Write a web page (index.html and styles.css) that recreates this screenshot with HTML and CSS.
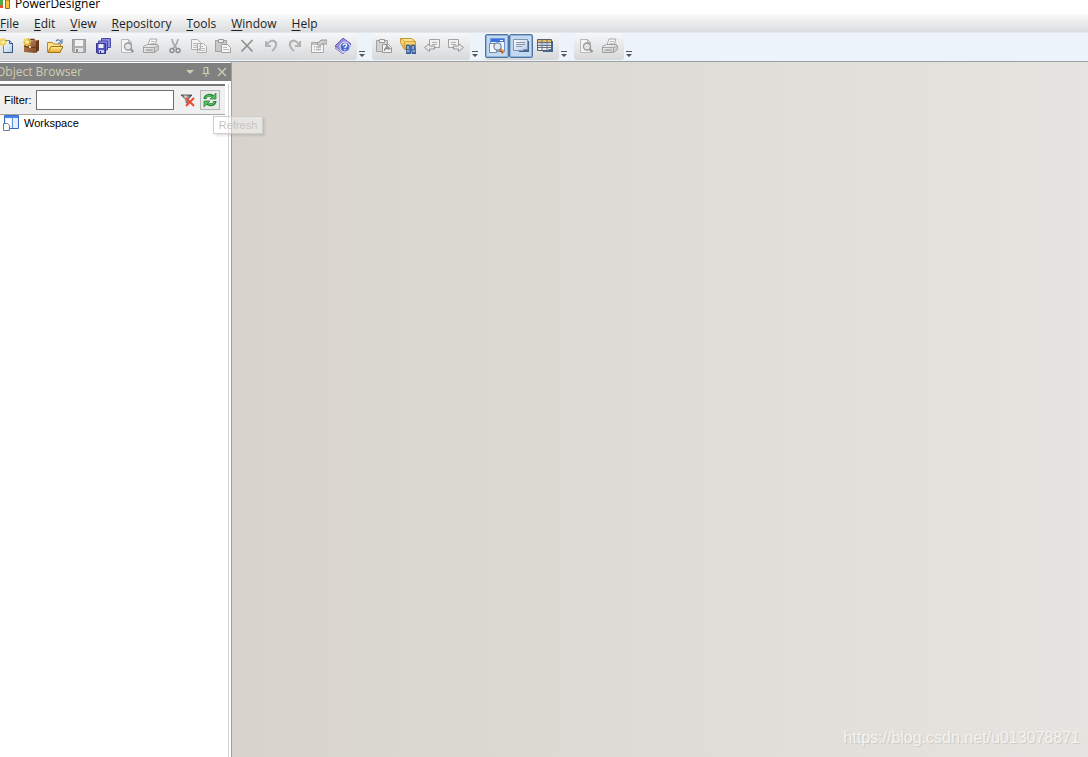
FILE: index.html
```html
<!DOCTYPE html>
<html lang="en">
<head>
<meta charset="utf-8">
<title>PowerDesigner</title>
<link rel="stylesheet" href="styles.css">
</head>
<body>
<svg class="sprite" aria-hidden="true">
  <defs>
    <linearGradient id="gold" x1="0" y1="0" x2="0" y2="1"><stop offset="0" stop-color="#fff0a0"/><stop offset="1" stop-color="#eba528"/></linearGradient>
    <linearGradient id="silver" x1="0" y1="0" x2="1" y2="1"><stop offset="0" stop-color="#fafafa"/><stop offset="1" stop-color="#c0c0c0"/></linearGradient>
    <linearGradient id="sky" x1="0" y1="0" x2="1" y2="1"><stop offset="0" stop-color="#fff"/><stop offset="1" stop-color="#b3cbe8"/></linearGradient>
    <linearGradient id="leather" x1="0" y1="0" x2="1" y2="1"><stop offset="0" stop-color="#c08a5c"/><stop offset="1" stop-color="#7a4222"/></linearGradient>
    <linearGradient id="funnel" x1="0" y1="0" x2="1" y2="0"><stop offset="0" stop-color="#333"/><stop offset=".4" stop-color="#ddd"/><stop offset="1" stop-color="#333"/></linearGradient>
  </defs>
  <symbol id="star" viewBox="0 0 16 16"><path d="M4 0v8M0 4h8M1 1l6 6M7 1L1 7" stroke="#f3cb45" stroke-width="1.600"/><circle cx="4" cy="4" r="1.600" fill="#fff7b0"/></symbol>
  <symbol id="new" viewBox="0 0 16 16"><path d="M4.500 2.500h6l3 3v9h-9z" fill="url(#sky)" stroke="#7187a3"/><path d="M10.500 2.500v3h3v9h-9" fill="none" stroke="#34567f"/><use href="#star"/></symbol>
  <symbol id="case" viewBox="0 0 16 16"><path d="M6 4V1.500h5V4" fill="none" stroke="#6c381c" stroke-width="1.400"/><path d="M1 4l3-1 12-1v10l-4 3-11-1z" fill="url(#leather)"/><path d="M13 4l3-2v10l-3 3z" fill="#6d3719"/><path d="M1 8c4 2 8 2 12 1" fill="none" stroke="#63331a"/><path d="M6 8h2v2H6z" fill="#f5d6a2"/><use href="#star"/></symbol>
  <symbol id="open" viewBox="0 0 16 16"><path d="M.5 14V4.500h5l1 1.500h7v8z" fill="#ffe28b" stroke="#b78825"/><path d="M1 14.500L4 8.500h12l-3 6z" fill="url(#gold)" stroke="#9f741b"/><path d="M9 3c2-2 4-1 5 1m1-3v4h-4" fill="none" stroke="#527da8" stroke-width="1.200"/></symbol>
  <symbol id="save" viewBox="0 0 16 16"><path d="M1.500 1.500h13v13h-12l-1-1z" fill="#b0b0b0" stroke="#989898"/><path d="M4 2h8v6H4z" fill="#f2f2f2"/><path d="M4 10h8v4H4z" fill="#e4e4e4"/><path d="M5 11h2v3H5z" fill="#909090"/></symbol>
  <symbol id="saveall" viewBox="0 0 16 16"><path d="M6.500.5h9v9h-9z" fill="#8a8adf" stroke="#4b4aa8"/><path d="M3.500 3h9v9h-9z" fill="#8587df" stroke="#4a4aa6"/><path d="M1.500 5.500h9v10h-8l-1-1z" fill="#5554bd" stroke="#34348d"/><path d="M3.500 6h5v4h-5z" fill="#edf0ff"/><path d="M4 12h5v3H4z" fill="#c8d0f2"/><path d="M5 13h1v2H5z" fill="#27286c"/></symbol>
  <symbol id="preview" viewBox="0 0 16 16"><path d="M2.500 1.500h7l3 3v10h-10z" fill="#f5f5f5" stroke="#b8b8b8"/><path d="M9.500 1.500v3h3" fill="none" stroke="#b0b0b0"/><circle cx="9" cy="8.500" r="3.500" fill="#e4e4e4" stroke="#989898" stroke-width="1.300"/><path d="M11.500 11l3 3" stroke="#989898" stroke-width="2.400"/></symbol>
  <symbol id="print" viewBox="0 0 16 16"><path d="M5 7l2-6h7l-2 6z" fill="#f7f7f7" stroke="#acacac"/><path d="M.5 8.500l4-2h10l1 2v3l-4 3H.5z" fill="url(#silver)" stroke="#a0a0a0"/><path d="M1 9.500h10.500v4.500M11.500 9.500l4-1.500" fill="none" stroke="#a5a5a5"/><path d="M2.500 12h7" stroke="#8d8d8d"/><path d="M8 3.500h4M7.500 5.500h4" stroke="#bbb"/></symbol>
  <symbol id="cut" viewBox="0 0 16 16"><path d="M5 1l1 4 4 6M11 1l-1 4-4 6" fill="none" stroke="#a8a8a8" stroke-width="1.700"/><circle cx="5" cy="12.500" r="2" fill="none" stroke="#8d8d8d" stroke-width="1.400"/><circle cx="11" cy="12.500" r="2" fill="none" stroke="#8d8d8d" stroke-width="1.400"/></symbol>
  <symbol id="copy" viewBox="0 0 16 16"><path d="M.5 1.500h6l3 3v7h-9zM6.500 5.500h6l3 3v6h-9z" fill="#f3f3f3" stroke="#acacac"/><path d="M2 5.500h4M2 7.500h4M2 9.500h4M8 8.500h4M8 10.500h6M8 12.500h6" stroke="#bbb"/></symbol>
  <symbol id="paste" viewBox="0 0 16 16"><path d="M.5 2.500h11v11H.5z" fill="#c8c8c8" stroke="#a0a0a0"/><path d="M3.500 1.500h5v3h-5z" fill="#eee" stroke="#999"/><path d="M6.500 6.500h6l3 3v5h-9z" fill="#f6f6f6" stroke="#a0a0a0"/><path d="M8 9.500h4M8 11.500h6" stroke="#bbb"/></symbol>
  <symbol id="delete" viewBox="0 0 16 16"><path d="M2.500 2l11 11.500M13.500 2l-11 11.500" stroke="#8c8c8c" stroke-width="1.600"/></symbol>
  <symbol id="undo" viewBox="0 0 16 16"><path d="M3 3v5h5M4 7c2-4 5-5 7-4 4 2 2 7-2 10" fill="none" stroke="#b2b2b2" stroke-width="2"/></symbol>
  <symbol id="redo" viewBox="0 0 16 16"><path d="M13 3v5H8M12 7c-2-4-5-5-7-4-4 2-2 7 2 10" fill="none" stroke="#b2b2b2" stroke-width="2"/></symbol>
  <symbol id="props" viewBox="0 0 16 16"><path d="M.5 4.500h12v10H.5z" fill="#f3f3f3" stroke="#a8a8a8"/><path d="M1 6h11M3 9h1M5 9h5M3 11.500h1M5 11.500h5" stroke="#b2b2b2" stroke-width="1.400"/><path d="M6 6l4-4h6v4h-5L9 8z" fill="#ccc" stroke="#999"/></symbol>
  <symbol id="help" viewBox="0 0 16 16"><path d="M0 8l8-8 8 6-8 9z" fill="#9b8edc" stroke="#6758b2"/><path d="M0 8v2l8 6 8-8V6l-8 8z" fill="#d7d0f2" stroke="#6556ad" stroke-width=".7"/><circle cx="10" cy="9" r="5" fill="#526fca" stroke="#e4ecff"/><path d="M8.300 7.500c0-2.500 3.800-2 3.300 0-.3 1-1.600 1-1.600 2.500M10 11v1.300" fill="none" stroke="#fff" stroke-width="1.300"/></symbol>
  <symbol id="pastelink" viewBox="0 0 16 16"><path d="M.5 2.500h11v11H.5z" fill="#d2d2d2" stroke="#a0a0a0"/><path d="M3.500 1.500h5v3h-5zM6.500 6.500h6l3 3v5h-9z" fill="#f3f3f3" stroke="#999"/><path d="M8.500 13c0-3 1-4 3-4m-1-2v4h4z" fill="#999" stroke="#8a8a8a"/></symbol>
  <symbol id="find" viewBox="0 0 16 16"><path d="M.5.500h11l4 3v8h-11l-4-7z" fill="url(#gold)" stroke="#c4932d"/><path d="M.5.500l4 3h11M4.500 3.500v8" fill="none" stroke="#d6a53a"/><path d="M6.500 7h3l1 2 1-2h3l1.500 9h-4v-3h-1.500v3h-4z" fill="#476ca8" stroke="#244b84" stroke-width=".7"/><path d="M7 13h2.500M12.500 13H15M8 8v3M13 8v3" stroke="#d6e6f9"/></symbol>
  <symbol id="back" viewBox="0 0 16 16"><path d="M5.500 1.500h10v8h-10z" fill="#f0f0f0" stroke="#a2a2a2"/><path d="M8 4.500h5M8 6.500h5" stroke="#b0b0b0"/><path d="M.5 9.500l5-4v2.500h5v3h-5v2.500z" fill="#e8e8e8" stroke="#959595"/></symbol>
  <symbol id="forward" viewBox="0 0 16 16"><path d="M.5 1.500h10v8H.5z" fill="#f0f0f0" stroke="#a2a2a2"/><path d="M3 4.500h5M3 6.500h5" stroke="#b0b0b0"/><path d="M15.500 9.500l-5-4v2.500h-5v3h5v2.500z" fill="#e8e8e8" stroke="#959595"/></symbol>
  <symbol id="browser" viewBox="0 0 16 16"><path d="M1.500.5h14v13h-14z" fill="#eff5ff" stroke="#6a92d2"/><path d="M2 1h13v3H2z" fill="#3974e5"/><path d="M11 2.500h3" stroke="#fff"/><path d="M.5 5.500h5l2 2v7h-7z" fill="#fafcff" stroke="#7b8b9f"/><circle cx="8.500" cy="8.500" r="3.600" fill="#dcecfb" stroke="#6f8090" stroke-width="1.200"/><path d="M11 11.500l3.500 3" stroke="#b95e1b" stroke-width="3"/><path d="M11.500 11.500l3 2" stroke="#ffb54f"/></symbol>
  <symbol id="output" viewBox="0 0 16 16"><path d="M3 3h13v11H6z" fill="#45658b"/><path d="M.5 1.500h14v10h-3l-2 1H.5z" fill="url(#sky)" stroke="#8293ab"/><path d="M3 4.500h9M3 6.500h9M3 8.500h6" stroke="#8a98ab"/></symbol>
  <symbol id="result" viewBox="0 0 16 16"><path d="M3 3h13v11H6z" fill="#45658b"/><path d="M.5 1.500h14v10h-2l-2 1H.5z" fill="#e9eff7" stroke="#56616f"/><path d="M1 2h13v2H1z" fill="#e4bd63"/><path d="M1 4.500h13M1 7.500h13M1 9.500h13M5 2v10M10 2v10" stroke="#68717d"/><path d="M2 6h2M6 6h3M11 6h2" stroke="#86a9e0"/></symbol>
  <symbol id="clear" viewBox="0 0 16 16"><path d="M1 3h11L8 7.500V12l-2-1.500v-3z" fill="url(#funnel)" stroke="#444" stroke-width=".8"/><path d="M6 6l8 8M14 6l-8 8" stroke="#ee4a30" stroke-width="2"/></symbol>
  <symbol id="refresh" viewBox="0 0 16 16"><path d="M3 7c0-4 6-5 8-2M13 9c0 4-6 5-8 2" fill="none" stroke="#228735" stroke-width="3"/><path d="M14 1v6H8zM2 15V9h6z" fill="#55bc60" stroke="#228735" stroke-width=".7"/><path d="M3.500 6c1-3 5-3 7-1M12.500 10c-1 3-5 3-7 1" fill="none" stroke="#85d68a"/></symbol>
  <symbol id="workspace" viewBox="0 0 16 16"><path d="M1.500.5h14v13h-14z" fill="#e5efff" stroke="#3569c4"/><path d="M2 1h13v2H2z" fill="#4786ec"/><path d="M9.500 3v10" stroke="#5f90dc"/><path d="M3 4h5v8H3z" fill="#fff"/><path d="M.5 8.500h4l2 2v5h-6z" fill="#fbfdff" stroke="#6c7f98"/></symbol>
</svg>

<div class="app">
  <header class="titlebar">
    <svg class="logo" viewBox="0 0 10 10"><path d="M0 0h3v5H0z" fill="#49ad4e"/><path d="M0 5h3v3H0z" fill="#e6532d"/><path d="M5.500 0h4v8.500h-4z" fill="#f8c638" stroke="#a8641e"/></svg>
    <h1 class="title">PowerDesigner</h1>
  </header>

  <nav class="menubar">
    <button class="menu"><u>F</u>ile</button>
    <button class="menu"><u>E</u>dit</button>
    <button class="menu"><u>V</u>iew</button>
    <button class="menu"><u>R</u>epository</button>
    <button class="menu"><u>T</u>ools</button>
    <button class="menu"><u>W</u>indow</button>
    <button class="menu"><u>H</u>elp</button>
  </nav>

  <div class="toolbar">
    <div class="group group-main">
      <button class="tool" aria-label="New"><svg><use href="#new"/></svg></button>
      <button class="tool" aria-label="New project"><svg><use href="#case"/></svg></button>
      <button class="tool" aria-label="Open"><svg><use href="#open"/></svg></button>
      <button class="tool" aria-label="Save"><svg><use href="#save"/></svg></button>
      <button class="tool" aria-label="Save all"><svg><use href="#saveall"/></svg></button>
      <button class="tool" aria-label="Print preview"><svg><use href="#preview"/></svg></button>
      <button class="tool" aria-label="Print"><svg><use href="#print"/></svg></button>
      <button class="tool" aria-label="Cut"><svg><use href="#cut"/></svg></button>
      <button class="tool" aria-label="Copy"><svg><use href="#copy"/></svg></button>
      <button class="tool" aria-label="Paste"><svg><use href="#paste"/></svg></button>
      <button class="tool" aria-label="Delete"><svg><use href="#delete"/></svg></button>
      <button class="tool" aria-label="Undo"><svg><use href="#undo"/></svg></button>
      <button class="tool" aria-label="Redo"><svg><use href="#redo"/></svg></button>
      <button class="tool" aria-label="Properties"><svg><use href="#props"/></svg></button>
      <button class="tool" aria-label="Help"><svg><use href="#help"/></svg></button>
    </div>
    <button class="more" aria-label="More standard tools"><svg viewBox="0 0 6 6"><path d="M0 0h6v1H0zM0 3h6L3 6z"/></svg></button>
    <div class="group">
      <button class="tool" aria-label="Paste as shortcut"><svg><use href="#pastelink"/></svg></button>
      <button class="tool" aria-label="Find objects"><svg><use href="#find"/></svg></button>
      <button class="tool" aria-label="Previous"><svg><use href="#back"/></svg></button>
      <button class="tool" aria-label="Next"><svg><use href="#forward"/></svg></button>
    </div>
    <button class="more" aria-label="More repository tools"><svg viewBox="0 0 6 6"><path d="M0 0h6v1H0zM0 3h6L3 6z"/></svg></button>
    <div class="group">
      <button class="tool active" aria-label="Browser" aria-pressed="true"><svg><use href="#browser"/></svg></button>
      <button class="tool active" aria-label="Output" aria-pressed="true"><svg><use href="#output"/></svg></button>
      <button class="tool" aria-label="Result list"><svg><use href="#result"/></svg></button>
    </div>
    <button class="more" aria-label="More view tools"><svg viewBox="0 0 6 6"><path d="M0 0h6v1H0zM0 3h6L3 6z"/></svg></button>
    <div class="group">
      <button class="tool" aria-label="Report preview"><svg><use href="#preview"/></svg></button>
      <button class="tool" aria-label="Print report"><svg><use href="#print"/></svg></button>
    </div>
    <button class="more" aria-label="More report tools"><svg viewBox="0 0 6 6"><path d="M0 0h6v1H0zM0 3h6L3 6z"/></svg></button>
  </div>

  <div class="content">
    <aside class="panel">
      <div class="panel-head">
        <h2 class="panel-title">Object Browser</h2>
        <button class="panel-btn" aria-label="Menu"><svg viewBox="0 0 10 10"><path d="M1 3h8L5 7z" fill="currentColor"/></svg></button>
        <button class="panel-btn" aria-label="Pin"><svg viewBox="0 0 10 10"><path d="M3 6V.5h4V6M1.500 6.500h7M6.500 1v5M5 7v3" fill="none" stroke="currentColor"/></svg></button>
        <button class="panel-btn" aria-label="Close"><svg viewBox="0 0 10 10"><path d="M1 1l8 8M9 1L1 9" stroke="currentColor" stroke-width="1.400"/></svg></button>
      </div>
      <div class="panel-body">
        <div class="filter">
          <label class="filter-label" for="filter">Filter:</label>
          <input class="filter-box" id="filter" type="text">
          <button class="filter-btn" aria-label="Clear filter"><svg><use href="#clear"/></svg></button>
          <button class="filter-btn raised" aria-label="Refresh"><svg><use href="#refresh"/></svg></button>
          <span class="tooltip" role="tooltip">Refresh</span>
        </div>
        <ul class="tree">
          <li class="node"><svg><use href="#workspace"/></svg>Workspace</li>
        </ul>
      </div>
    </aside>
    <main class="canvas"><span class="watermark">https://blog.csdn.net/u013078871</span></main>
  </div>
</div>
</body>
</html>
```
FILE: styles.css
```css
* { box-sizing: border-box; }
body { margin: 0; font: 11px "Liberation Sans", Arial, sans-serif; color: #000; }
button { margin: 0; padding: 0; border: 0; background: none; font: inherit; color: inherit; }
h1, h2, ul { margin: 0; padding: 0; font-weight: normal; list-style: none; }
.sprite { position: absolute; width: 0; height: 0; }
.app { display: flex; flex-direction: column; height: 100vh; overflow: hidden; }

.titlebar { display: flex; align-items: flex-end; gap: 5px; height: 14px; background: #fff; }
.logo { width: 10px; height: 10px; margin-bottom: 4px; }
.title { font: 12px/20px "Open Sans", "Noto Sans", sans-serif; }

.menubar { display: flex; gap: 15px; height: 18px; background: linear-gradient(#fafafa, #dbdcde); }
.menu { font: 12px/20px "Open Sans", "Noto Sans", sans-serif; color: #1e1e1e; }
.menu u { text-underline-offset: 2px; }

.toolbar { display: flex; height: 30px; background: #edf3fa; border-top: 1px solid #e6e7e9; border-bottom: 1px solid #9d9fa2; }
.group { display: flex; align-items: flex-start; padding: 1px 2px 0 0; height: 27px; background: linear-gradient(#f6f7f8, #d7d8da); border-radius: 3px; }
.group-main { margin-left: -5px; }
.tool { display: flex; align-items: center; justify-content: center; width: 24px; height: 24px; }
.tool svg, .filter-btn svg, .node svg { flex: none; width: 16px; height: 16px; }
.tool.active { border: 1px solid #4e749f; border-radius: 2px; background: #c3d9f2; box-shadow: inset 0 0 0 1px #91b3da; }
.more { display: flex; align-items: flex-end; width: 15px; padding: 0 0 4px 2px; }
.more svg { width: 6px; height: 6px; fill: #555; }

.content { display: flex; flex: 1; min-height: 0; }
.panel { display: flex; flex-direction: column; width: 232px; border-right: 1px solid #a0a0a0; background: #fff; }
.panel-head { display: flex; align-items: center; gap: 6px; height: 18px; margin-top: 1px; padding-right: 4px; background: #808080; color: #d0ccb0; }
.panel-title { flex: 1; margin-left: -4px; font: 12px/18px "Open Sans", "Noto Sans", sans-serif; }
.panel-btn { width: 10px; height: 10px; }
.panel-btn svg { display: block; width: 10px; height: 10px; }
.panel-body { flex: 1; margin: 3px 2px 0 0; padding-right: 3px; border-right: 1px solid #d4d4d4; }
.filter { position: relative; display: flex; align-items: center; height: 31px; padding: 0 5px 0 4px; background: #f0f0f0; border-top: 2px solid #777; border-bottom: 1px solid #a5a5a5; }
.filter-label { margin-right: 4px; }
.filter-box { flex: 1; min-width: 0; height: 20px; margin-right: 2px; padding: 0 3px; border: 1px solid #707070; background: #fff; font: inherit; }
.filter-btn { display: flex; align-items: center; justify-content: center; width: 20px; height: 20px; margin-left: 2px; }
.raised { border: 1px solid #b6b6b6; background: #e9e9e9; }
.tooltip { position: absolute; top: 30px; left: 213px; width: 50px; height: 18px; border: 1px solid #cfcdc9; background: rgba(255, 255, 255, .4); box-shadow: 2px 2px 2px rgba(0, 0, 0, .1); color: #c6c4c1; line-height: 16px; text-align: center; z-index: 1; }
.node { display: flex; align-items: center; gap: 5px; height: 16px; padding-left: 3px; }

.canvas { display: flex; flex: 1; align-items: flex-end; justify-content: flex-end; padding: 0 8px 10px; background: linear-gradient(90deg, #d8d4cd, #dedcd6 50%, #e5e4e0); }
.watermark { font-size: 16px; line-height: 18px; color: #f3f3f1; text-shadow: 1px 1px 1px #c8c6c2; }
```
